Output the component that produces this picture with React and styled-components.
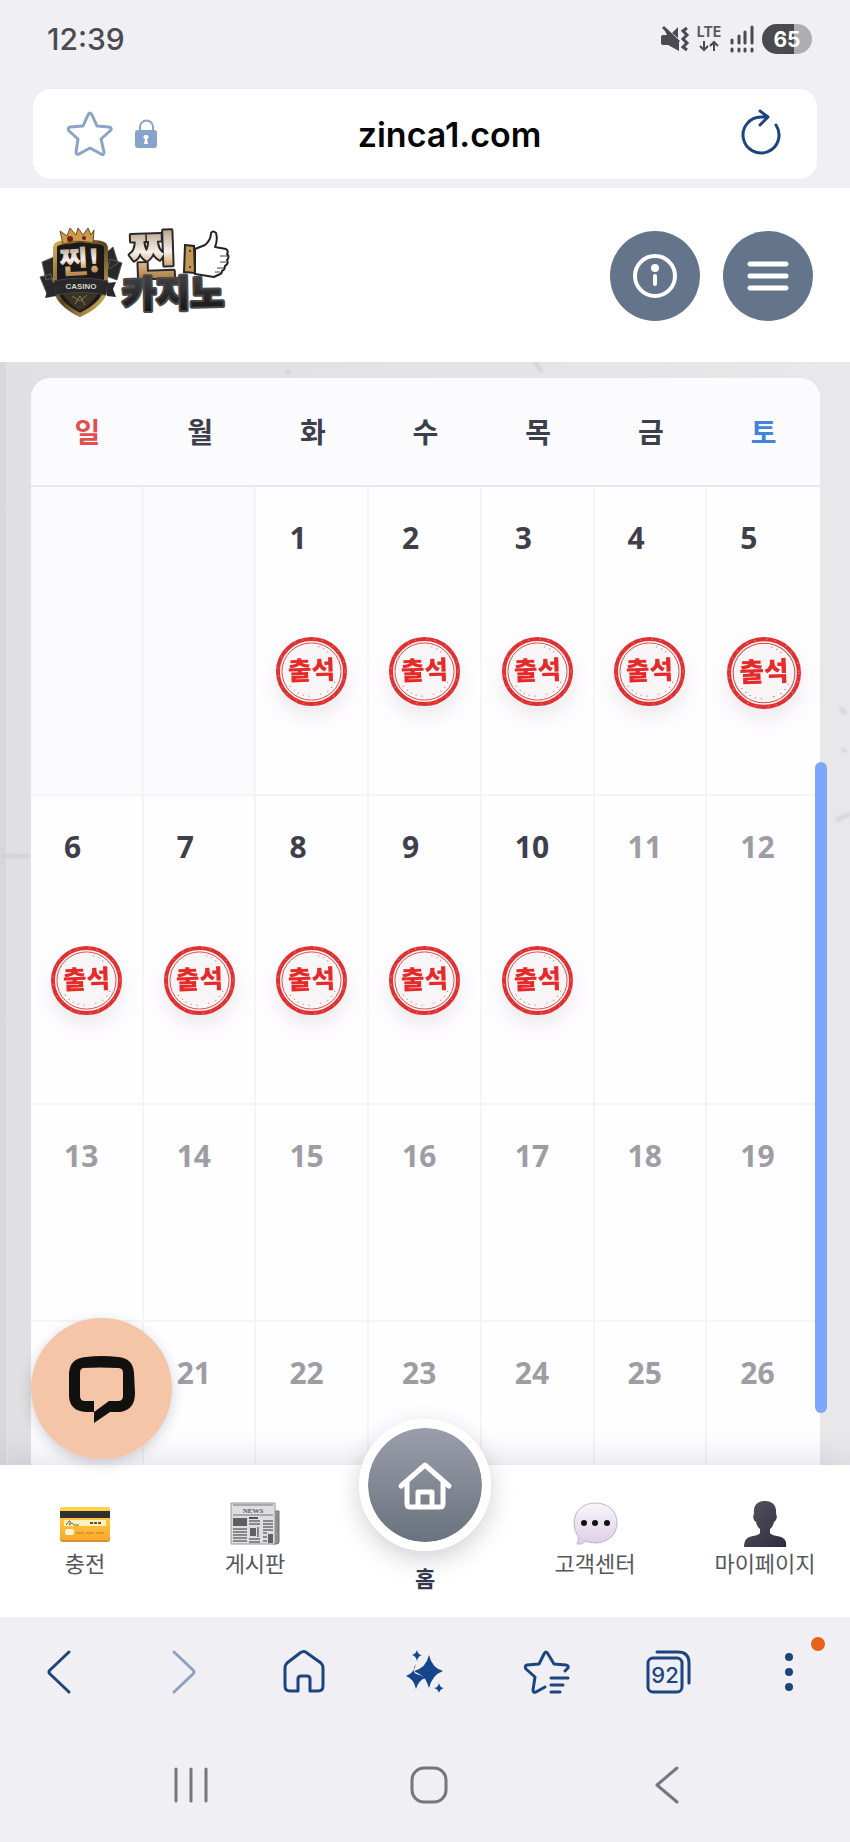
import styled, { createGlobalStyle } from "styled-components"

const GlobalStyle = createGlobalStyle`
  * {
    box-sizing: border-box;
  }
  body {
    margin: 0;
    background: #f0eff4;
    font-family: "Noto Sans", "Noto Sans CJK KR", sans-serif;
    color: #3b3f4c;
  }
  button {
    background: none;
    border: 0;
    padding: 0;
    cursor: pointer;
    font-family: inherit;
  }
  svg {
    display: block;
    flex-shrink: 0;
    overflow: visible;
  }
`

const Screen = styled.div`
  display: flex;
  flex-direction: column;
  height: 100vh;
  min-height: 900px;
`

const StatusBar = styled.div`
  display: flex;
  align-items: center;
  justify-content: space-between;
  height: 77px;
  padding: 0 38px 0 47px;
`

const Clock = styled.time`
  color: #4b4a50;
  font: 500 30px "Inter", sans-serif;
`

const StatusIcons = styled.div`
  display: flex;
  align-items: center;
  gap: 8px;
`

const AddressBar = styled.div`
  display: flex;
  align-items: center;
  background: #fff;
  border-radius: 18px;
  height: 90px;
  margin: 12px 33px 9px;
  padding: 0 36px 0 34px;
`

const AddressActions = styled.div`
  display: flex;
  align-items: center;
  gap: 22px;
`

const AddressInput = styled.input`
  background: none;
  border: 0;
  color: #060606;
  flex: 1;
  font: 600 34px "Inter", sans-serif;
  min-width: 0;
  padding: 0;
  text-align: center;
`

const SiteHeader = styled.header`
  align-items: center;
  background: #fff;
  display: flex;
  flex-shrink: 0;
  height: 174px;
  justify-content: space-between;
  padding: 2px 37px 0 38px;
`

const HeaderButtons = styled.div`
  display: flex;
  gap: 23px;
`

const RoundButton = styled.button`
  align-items: center;
  background: #64748b;
  border-radius: 50%;
  display: flex;
  height: 90px;
  justify-content: center;
  width: 90px;
`

const Content = styled.main`
  background:
    linear-gradient(90deg, #d9d7db 0 6px, transparent 6px),
    linear-gradient(90deg, #e0dfe2, #e3e2e5 50%, #e8e7ea);
  flex: 1;
  min-height: 0;
  overflow: hidden;
  padding: 16px 30px 0 31px;
  position: relative;
`

const Marble = styled.svg`
  filter: blur(1px);
  height: 100%;
  left: 0;
  position: absolute;
  top: 0;
  width: 100%;
`

const Calendar = styled.table`
  background: #fefdff;
  border-collapse: separate;
  border-radius: 20px 20px 0 0;
  border-spacing: 0;
  overflow: hidden;
  position: relative;
  table-layout: fixed;
  width: 100%;
`

const weekdayColors = { sun: "#e0504f", sat: "#4382e0" }

const Weekday = styled.th`
  background: #fbfafd;
  border-bottom: 2px solid #e9e6ec;
  color: ${({ $kind }) => weekdayColors[$kind] || "#3b3f4c"};
  font-size: 28px;
  font-weight: 700;
  height: 109px;
  line-height: 40px;
  padding: 0;
`

const DayCell = styled.td`
  background: ${({ $blank }) => ($blank ? "#fbfafd" : "#fefdff")};
  border-bottom: 2px solid #f5f4f7;
  border-right: 2px solid #f5f4f7;
  color: ${({ $future }) => ($future ? "#9d9da3" : "#3e3f4b")};
  font-size: 30px;
  font-weight: 700;
  height: ${({ $tall }) => ($tall ? 309 : 217)}px;
  line-height: 40px;
  padding: 31px 0 0;
  vertical-align: top;

  &:last-child {
    border-right: 0;
  }
`

const DayNumber = styled.div`
  padding-left: 33px;
`

const StampMark = styled.svg`
  filter: drop-shadow(0 10px 10px rgba(80, 50, 60, 0.1));
  margin: 79px auto 0;
`

const ScrollThumb = styled.div`
  background: #7fa5f8;
  border-radius: 6px;
  height: 651px;
  position: absolute;
  right: 23px;
  top: 400px;
  width: 12px;
`

const SiteNav = styled.nav`
  background: #fff;
  box-shadow: 0 -4px 30px rgba(40, 30, 60, 0.13);
  display: grid;
  flex-shrink: 0;
  grid-template-columns: repeat(5, 1fr);
  height: 152px;
  position: relative;
`

const NavLink = styled.a`
  align-items: center;
  color: #55565c;
  display: flex;
  flex-direction: column;
  font-size: 22px;
  line-height: 32px;
  padding-top: 36px;
  text-decoration: none;
`

const HomeLink = styled(NavLink)`
  color: #33374a;
  font-weight: 700;
  padding-top: 0;
`

const HomeCircle = styled.span`
  align-items: center;
  background: linear-gradient(#9b9eaa, #69727e);
  background-clip: padding-box;
  border: 9px solid #fff;
  border-radius: 50%;
  box-shadow: 0 8px 24px rgba(50, 50, 70, 0.22);
  display: flex;
  height: 132px;
  justify-content: center;
  margin: -46px 0 11px;
  width: 132px;
`

const ChatButton = styled.button`
  align-items: center;
  background: #f4c6a7;
  border-radius: 50%;
  bottom: 100%;
  box-shadow: 0 4px 14px rgba(40, 40, 60, 0.2);
  display: flex;
  height: 141px;
  justify-content: center;
  left: 31px;
  margin-bottom: 6px;
  position: absolute;
  width: 141px;
`

const BrowserBar = styled.nav`
  background: #f0eff4;
  display: grid;
  flex-shrink: 0;
  grid-template-columns: repeat(7, 1fr);
  height: 110px;
  position: relative;
`

const BarButton = styled.button`
  align-items: center;
  color: #1c4580;
  display: flex;
  justify-content: center;
  opacity: ${({ $dim }) => ($dim ? 0.45 : 1)};
  position: relative;
`

const Badge = styled.span`
  background: #e8601c;
  border-radius: 50%;
  height: 14px;
  left: 82px;
  position: absolute;
  top: 20px;
  width: 14px;
`

const SystemBar = styled.nav`
  display: grid;
  flex-shrink: 0;
  grid-template-columns: repeat(3, 1fr);
  height: 115px;
  padding: 0 64px 0 72px;
`

const SystemButton = styled(BarButton)`
  color: #77767c;
`

const WEEKDAYS = [
  { label: "일", kind: "sun" },
  { label: "월" },
  { label: "화" },
  { label: "수" },
  { label: "목" },
  { label: "금" },
  { label: "토", kind: "sat" },
]

const WEEKS = [
  [null, null, 1, 2, 3, 4, 5],
  [6, 7, 8, 9, 10, 11, 12],
  [13, 14, 15, 16, 17, 18, 19],
  [20, 21, 22, 23, 24, 25, 26],
]

const TODAY = 10

const line = {
  fill: "none",
  stroke: "currentColor",
  strokeLinecap: "round",
  strokeLinejoin: "round",
}

const MuteIcon = () => (
  <svg width="28" height="26" viewBox="0 0 28 26">
    <path d="M1 11q0-2 2-2h4L4 3l15 13v9L8 19H3q-2 0-2-2zM18 1v11l-6-5z" fill="#4b4a50" />
    <path d="M3 1l16 15" stroke="#4b4a50" strokeWidth="3" />
    <path d="M27 2l-4 3 4 4-4 4 4 4-4 4 4 3" fill="none" stroke="#4b4a50" strokeWidth="3" />
  </svg>
)

const LteIcon = () => (
  <svg width="26" height="28" viewBox="0 0 26 28">
    <text x="13" y="12" textAnchor="middle" fill="#5b5a60" fontFamily="Inter, sans-serif" fontSize="14" fontWeight="700">LTE</text>
    <path d="M8 16v9m-4-4l4 4 4-4M18 26v-9m-4 4l4-4 4 4" fill="none" stroke="#4b4a50" strokeWidth="2" />
  </svg>
)

const SignalIcon = () => (
  <svg width="24" height="28" viewBox="1 0 24 28" stroke="#4b4a50" strokeWidth="3">
    <path d="M3 15v3M10 11v7M16 7v11M23 2v16" strokeLinecap="round" />
    <path d="M3 24v2M10 24v2M16 24v2M23 24v2" strokeLinecap="round" />
  </svg>
)

const BatteryIcon = () => (
  <svg width="50" height="30" viewBox="0 0 50 30">
    <rect width="50" height="30" rx="15" fill="#aeadb2" />
    <path d="M15 0h17v30H15a15 15 0 0 1 0-30z" fill="#4b4a50" />
    <text x="25" y="23" textAnchor="middle" fill="#fff" fontFamily="Inter, sans-serif" fontSize="21" fontWeight="700">65</text>
  </svg>
)

const StarIcon = () => (
  <svg width="46" height="46" viewBox="0 0 46 46" color="#8ba3c6">
    <path {...line} strokeWidth="3" d="M21 4q2-4 4 0l5 11 12 1q4 1 1 4l-9 8 3 13q0 4-3 2l-11-6-11 6q-3 1-3-2l2-13-9-8q-2-3 1-4l13-1z" />
  </svg>
)

const LockIcon = () => (
  <svg width="23" height="30" viewBox="0 0 23 30">
    <path d="M5 13V8a6 6 0 0 1 13 0v5" fill="none" stroke="#8ba3c6" strokeWidth="2" />
    <rect y="11" width="22" height="18" rx="3" fill="#86a3c9" />
    <path d="M11 16a2 2 0 0 1 1 4l1 5h-4l1-5a2 2 0 0 1 1-4z" fill="#fff" />
  </svg>
)

const ReloadIcon = () => (
  <svg width="40" height="48" viewBox="0 2 40 48" color="#1c4580">
    <path {...line} strokeWidth="3" d="M35 17A18 18 0 1 1 20 9h6M19 3l8 6-8 8" />
  </svg>
)

const InfoIcon = () => (
  <svg width="44" height="44" viewBox="0 0 44 44">
    <circle cx="22" cy="22" r="20" fill="none" stroke="#fff" strokeWidth="4" />
    <circle cx="22" cy="14" r="4" fill="#fff" />
    <path d="M22 22v8" stroke="#fff" strokeWidth="4" strokeLinecap="round" />
  </svg>
)

const MenuIcon = () => (
  <svg width="42" height="32" viewBox="0 0 42 32">
    <path d="M3 4h36M3 16h36M3 28h36" stroke="#fff" strokeWidth="5" strokeLinecap="round" />
  </svg>
)

const Logo = () => (
  <svg width="196" height="98" viewBox="0 0 196 98" role="img" aria-label="찐카지노">
    <defs>
      <linearGradient id="gold" x1="0" y1="0" x2="0" y2="1">
        <stop offset="0.2" stopColor="#b7a48a" />
        <stop offset="0.5" stopColor="#f7efe8" />
        <stop offset="0.65" stopColor="#dcb481" />
        <stop offset="0.9" stopColor="#a5753b" />
      </linearGradient>
      <linearGradient id="rim" x1="0" y1="0" x2="1" y2="1">
        <stop offset="0" stopColor="#d5b053" />
        <stop offset="0.5" stopColor="#5a4420" />
        <stop offset="1" stopColor="#e3c064" />
      </linearGradient>
      <linearGradient id="steel" x1="0" y1="0" x2="0" y2="1">
        <stop offset="0.3" stopColor="#3d3d40" />
        <stop offset="1" stopColor="#0d0d0e" />
      </linearGradient>
    </defs>
    <g fill="#29282b" stroke="#5c5a58">
      <path d="M4 35l12-5 3 20-11 3zM2 50l11-3 4 17-8 3z" />
      <path d="M68 26l7-6 5 16-9 6zM72 32l12 4-5 17-11-4z" />
    </g>
    <path d="M17 20q0-4 11-5l14-2 15 2q11 1 11 5v42q-3 15-26 26Q20 77 17 62z" fill="#1b191a" stroke="url(#rim)" strokeWidth="4" />
    <path d="M24 66q6 10 18 18 13-8 18-18z" fill="#3b3323" />
    <path d="M34 69l8 5 7-6M37 77l5-8 5 9" stroke="#8b7b58" fill="none" />
    <path d="M25 17L22 4l7 5 3-8 6 7 2-7 5 7 5-7 3 7 3-5-1 13q-16-4-30 1z" fill="#c99b4b" stroke="#6f4a1e" />
    <circle cx="32" cy="12" r="3" fill="#6f2119" />
    <circle cx="46" cy="11" r="2" fill="#6f2119" />
    <text x="42" y="46" textAnchor="middle" fill="url(#gold)" fontFamily="Noto Sans CJK KR, sans-serif" fontSize="31" fontWeight="900" transform="rotate(-3 42 40)">찐!</text>
    <path d="M16 54q27-6 54 0l-2 14q-25-5-50 0z" fill="#29282a" stroke="#454347" />
    <path d="M17 56l-10-1 3 7-3 9 11-2zM69 56l9-1-3 7 3 8-9-1z" fill="#29282a" />
    <text x="43" y="62" textAnchor="middle" fill="#dad3c5" fontFamily="Liberation Sans, sans-serif" fontSize="8" fontWeight="700">CASINO</text>
    <g fontFamily="Noto Sans CJK KR, sans-serif" fontWeight="900" strokeLinejoin="round" paintOrder="stroke">
      <text x="91" y="47" fontSize="51" fill="url(#gold)" stroke="#29282a" strokeWidth="4" transform="rotate(-2 116 26)">찐</text>
      <text x="84" y="80" fontSize="37" fill="url(#steel)" stroke="#4a4a4c" strokeWidth="4" transform="rotate(-1 135 66)">카지노</text>
    </g>
    <path d="M157 22l10-4q6-5 6-12 2-3 5 0 2 7-1 14l11 2q3 2 1 5 3 3 0 6 2 4-2 6 0 4-3 5 0 3-4 4l-4 2-19-3z" fill="#fff" stroke="#242326" strokeWidth="2" strokeLinejoin="round" />
    <path d="M147 18l9 1 1 27-11-1z" fill="#c39857" stroke="#242326" strokeWidth="2" />
    <circle cx="152" cy="24" r="1" fill="#242326" />
    <circle cx="152" cy="40" r="1" fill="#242326" />
    <path d="M182 29h7M182 35h6M179 41h7M177 45h5" stroke="#444" />
  </svg>
)

const Stamp = ({ width }) => (
  <StampMark width={width} height={width - 1} viewBox="0 0 72 71" role="img" aria-label="출석">
    <ellipse cx="36" cy="35" rx="34" ry="33" fill="#f8f5f6" stroke="#df3131" strokeWidth="4" />
    <ellipse cx="36" cy="35" rx="34" ry="33" fill="none" stroke="#f3a9a7" strokeWidth="1" strokeDasharray="1 7 1 11" />
    <ellipse cx="36" cy="35" rx="30" ry="29" fill="none" stroke="#d94a48" strokeWidth="1" />
    <path d="M43 10h1M48 12h1M52 15h1M14 50h1M18 54h1M22 57h1M27 59h1M33 60h1M45 58h1M52 55h1M56 51h1M59 46h1" stroke="#dc5652" strokeWidth="1" />
    <text x="36" y="43" textAnchor="middle" fill="#e62a2a" fontFamily="Noto Sans CJK KR, sans-serif" fontSize="26" fontWeight="900" transform="rotate(-2 36 36)">출석</text>
  </StampMark>
)

const CardIcon = () => (
  <svg width="50" height="46" viewBox="0 0 50 46">
    <defs>
      <linearGradient id="card" x1="0" y1="0" x2="0" y2="1">
        <stop offset="0" stopColor="#ffd54a" />
        <stop offset="1" stopColor="#fba92c" />
      </linearGradient>
    </defs>
    <rect y="6" width="50" height="35" rx="3" fill="#d98f35" />
    <rect y="6" width="50" height="33" rx="3" fill="url(#card)" />
    <path d="M0 10h50v7H0z" fill="#303030" />
    <path d="M4 19h42v6H4z" fill="#fff0bf" />
    <path d="M6 24q3-5 4-4t-1 4l3-2 2 2h5" fill="none" stroke="#6b6240" />
    <path d="M30 22h12" stroke="#5c5334" strokeWidth="2" strokeDasharray="3 1" />
    <rect x="5" y="28" width="9" height="6" rx="2" fill="#fff4dd" />
    <path d="M16 32h30" stroke="#dc982c" strokeWidth="2" strokeDasharray="8 2" />
  </svg>
)

const NewsIcon = () => (
  <svg width="50" height="46" viewBox="0 0 50 46">
    <path d="M44 10h5v31q0 2-3 2h-3z" fill="#8c8c8f" stroke="#727275" />
    <path d="M1 2h44v41H1z" fill="#dedee0" stroke="#98989b" />
    <path d="M3 4h40M3 14h40" stroke="#737377" />
    <text x="23" y="12" textAnchor="middle" fill="#55555a" fontFamily="Liberation Serif, serif" fontSize="7" fontWeight="700">NEWS</text>
    <path d="M3 17h14v8H3zM20 27h6v8h-6zM38 33h5v9h-5z" fill="#606064" />
    <path d="M19 17h9" stroke="#555" strokeWidth="2" />
    <path d="M3 28h14M3 31h14M3 34h14M3 37h14M3 40h14M19 20h11M19 23h11M19 38h11M19 41h11M28 26v10M33 20h10M33 23h10M33 26h10M33 29h10M33 32h4M33 36h4M33 40h4" stroke="#88888c" strokeWidth="2" />
  </svg>
)

const BubbleIcon = () => (
  <svg width="50" height="46" viewBox="0 0 50 46">
    <defs>
      <linearGradient id="bubble" x1="0" y1="0" x2="0" y2="1">
        <stop offset="0" stopColor="#f8f5fa" />
        <stop offset="1" stopColor="#ddcfe8" />
      </linearGradient>
    </defs>
    <path d="M25 2c13 0 22 8 22 20S37 42 25 42q-5 0-9-2-4 4-9 3 3-4 1-8-4-5-4-13C4 10 13 2 25 2z" fill="url(#bubble)" stroke="#bfb5c5" />
    <circle cx="14" cy="22" r="3" fill="#111" />
    <circle cx="25" cy="22" r="3" fill="#111" />
    <circle cx="37" cy="22" r="3" fill="#111" />
  </svg>
)

const PersonIcon = () => (
  <svg width="50" height="46" viewBox="0 0 50 46">
    <defs>
      <linearGradient id="person" x1="0" y1="0" x2="1" y2="1">
        <stop offset="0" stopColor="#58565f" />
        <stop offset="1" stopColor="#2e2a3e" />
      </linearGradient>
    </defs>
    <path d="M25 0c8 0 12 5 11 13 2 3 0 7-2 8q-1 5-4 7v4q1 2 7 3c7 1 10 4 9 11H4c0-7 3-10 9-11q6-1 7-3v-4q-3-2-4-7c-2-1-4-5-2-8C13 5 17 0 25 0z" fill="url(#person)" />
  </svg>
)

const HouseIcon = () => (
  <svg width="54" height="50" viewBox="0 0 54 50" color="#fff">
    <path {...line} strokeWidth="5" d="M3 26L27 5l24 21M9 22v22q0 3 3 3h30q3 0 3-3V22M20 46V32h14v14" />
  </svg>
)

const ChatIcon = () => (
  <svg width="68" height="68" viewBox="0 0 68 68">
    <path
      fillRule="evenodd"
      fill="#11110f"
      d="M18 2q16-2 32 0 15 1 16 16l1 20q0 17-15 19H42L26 68V57H18Q1 56 1 40V18Q2 3 18 2zM16 13q-4 0-4 5v23q0 5 5 5h9v11l15-11h9q5 0 5-5V18q0-5-5-5-17-1-36 0z"
    />
  </svg>
)

const BrowserHomeIcon = () => (
  <svg width="42" height="44" viewBox="0 0 42 44">
    <path {...line} strokeWidth="3" d="M2 18q0-3 2-5L17 3q4-3 7 0l14 10q2 2 2 5v18q0 5-5 5h-8V29q0-3-3-3h-6q-3 0-3 3v12H7q-5 0-5-5z" />
  </svg>
)

const SparkleIcon = () => (
  <svg width="40" height="44" viewBox="0 0 40 44" fill="#15458a">
    <path d="M24 5q3 13 14 16-11 4-14 17-3-10-8-13l-7-4q12-3 15-16z" />
    <path d="M11 14q-2 9-10 12 8 3 10 13 2-8 9-11-3-3-9-4-5-3 0-10z" />
    <path d="M12 0q1 5 5 5-4 1-5 6-1-5-5-6 4-1 5-5zM34 33q1 5 5 5-4 1-5 5-1-4-5-5 4 0 5-5z" />
  </svg>
)

const FavoritesIcon = () => (
  <svg width="46" height="44" viewBox="0 0 46 44">
    <path {...line} strokeWidth="3" d="M22 37l-9 5q-3 1-3-2l2-13-9-8q-2-3 1-4l12-1 5-10q2-4 4 0l6 10 12 1q4 1 1 4l-2 2" />
    <path {...line} strokeWidth="3" d="M28 28h17M28 35h12M28 42h9" />
  </svg>
)

const TabsIcon = () => (
  <svg width="46" height="44" viewBox="0 0 46 44">
    <rect {...line} strokeWidth="3" x="3" y="8" width="34" height="34" rx="5" />
    <path {...line} strokeWidth="3" d="M12 2h21q11 0 11 11v20" />
    <text x="20" y="33" textAnchor="middle" fill="currentColor" fontFamily="Inter, sans-serif" fontSize="22" fontWeight="500">92</text>
  </svg>
)

const NAV_LEFT = [
  { label: "충전", Icon: CardIcon },
  { label: "게시판", Icon: NewsIcon },
]

const NAV_RIGHT = [
  { label: "고객센터", Icon: BubbleIcon },
  { label: "마이페이지", Icon: PersonIcon },
]

const NavItem = ({ label, Icon }) => (
  <NavLink href="#">
    <Icon />
    {label}
  </NavLink>
)

const Day = ({ day, column, tall }) => (
  <DayCell $blank={!day} $future={day > TODAY} $tall={tall}>
    <DayNumber>{day}</DayNumber>
    {day && day <= TODAY && <Stamp width={column === 6 ? 74 : 71} />}
  </DayCell>
)

const App = () => {
  return (<>
    <GlobalStyle />
    <Screen>
      <StatusBar>
        <Clock>12:39</Clock>
        <StatusIcons>
          <MuteIcon />
          <LteIcon />
          <SignalIcon />
          <BatteryIcon />
        </StatusIcons>
      </StatusBar>
      <AddressBar>
        <AddressActions>
          <button aria-label="즐겨찾기"><StarIcon /></button>
          <LockIcon />
        </AddressActions>
        <AddressInput aria-label="주소" defaultValue="zinca1.com" />
        <button aria-label="새로고침"><ReloadIcon /></button>
      </AddressBar>
      <SiteHeader>
        <Logo />
        <HeaderButtons>
          <RoundButton aria-label="안내"><InfoIcon /></RoundButton>
          <RoundButton aria-label="메뉴"><MenuIcon /></RoundButton>
        </HeaderButtons>
      </SiteHeader>
      <Content>
        <Marble fill="none" stroke="#cfced2" strokeWidth="4" aria-hidden="true">
          <path d="M0 494h30M535 0l7 10M286 10h4M840 346l6 6M842 386l4 4M850 452l-14 6" opacity="0.7" />
        </Marble>
        <Calendar>
          <thead>
            <tr>
              {WEEKDAYS.map(({ label, kind }) => (
                <Weekday key={label} scope="col" $kind={kind}>{label}</Weekday>
              ))}
            </tr>
          </thead>
          <tbody>
            {WEEKS.map((week, row) => (
              <tr key={row}>
                {week.map((day, column) => (
                  <Day key={column} day={day} column={column} tall={row < 2} />
                ))}
              </tr>
            ))}
          </tbody>
        </Calendar>
        <ScrollThumb />
      </Content>
      <SiteNav>
        {NAV_LEFT.map(item => <NavItem key={item.label} {...item} />)}
        <HomeLink href="#">
          <HomeCircle><HouseIcon /></HomeCircle>
          홈
        </HomeLink>
        {NAV_RIGHT.map(item => <NavItem key={item.label} {...item} />)}
        <ChatButton aria-label="채팅 상담"><ChatIcon /></ChatButton>
      </SiteNav>
      <BrowserBar>
        <BarButton aria-label="뒤로">
          <svg width="30" height="44" viewBox="0 0 30 44"><path {...line} strokeWidth="3" d="M23 2L4 20q-2 2 0 4l19 18" /></svg>
        </BarButton>
        <BarButton aria-label="앞으로" $dim>
          <svg width="30" height="44" viewBox="0 0 30 44"><path {...line} strokeWidth="3" d="M7 2l19 18q2 2 0 4L7 42" /></svg>
        </BarButton>
        <BarButton aria-label="홈"><BrowserHomeIcon /></BarButton>
        <BarButton aria-label="AI 도구"><SparkleIcon /></BarButton>
        <BarButton aria-label="북마크"><FavoritesIcon /></BarButton>
        <BarButton aria-label="탭"><TabsIcon /></BarButton>
        <BarButton aria-label="더보기">
          <svg width="8" height="38" viewBox="0 0 8 38" fill="currentColor">
            <circle cx="4" cy="4" r="4" />
            <circle cx="4" cy="19" r="4" />
            <circle cx="4" cy="34" r="4" />
          </svg>
          <Badge />
        </BarButton>
      </BrowserBar>
      <SystemBar>
        <SystemButton aria-label="최근 앱">
          <svg width="34" height="36" viewBox="0 0 34 36"><path {...line} strokeWidth="3" d="M2 2v32M17 2v32M32 2v32" /></svg>
        </SystemButton>
        <SystemButton aria-label="홈 화면">
          <svg width="38" height="38" viewBox="0 0 38 38"><rect {...line} strokeWidth="3" x="2" y="2" width="34" height="34" rx="12" /></svg>
        </SystemButton>
        <SystemButton aria-label="이전">
          <svg width="26" height="38" viewBox="0 0 26 38"><path {...line} strokeWidth="3" d="M23 2L3 19l20 17" /></svg>
        </SystemButton>
      </SystemBar>
    </Screen>
  </>
  )
}

export default App
